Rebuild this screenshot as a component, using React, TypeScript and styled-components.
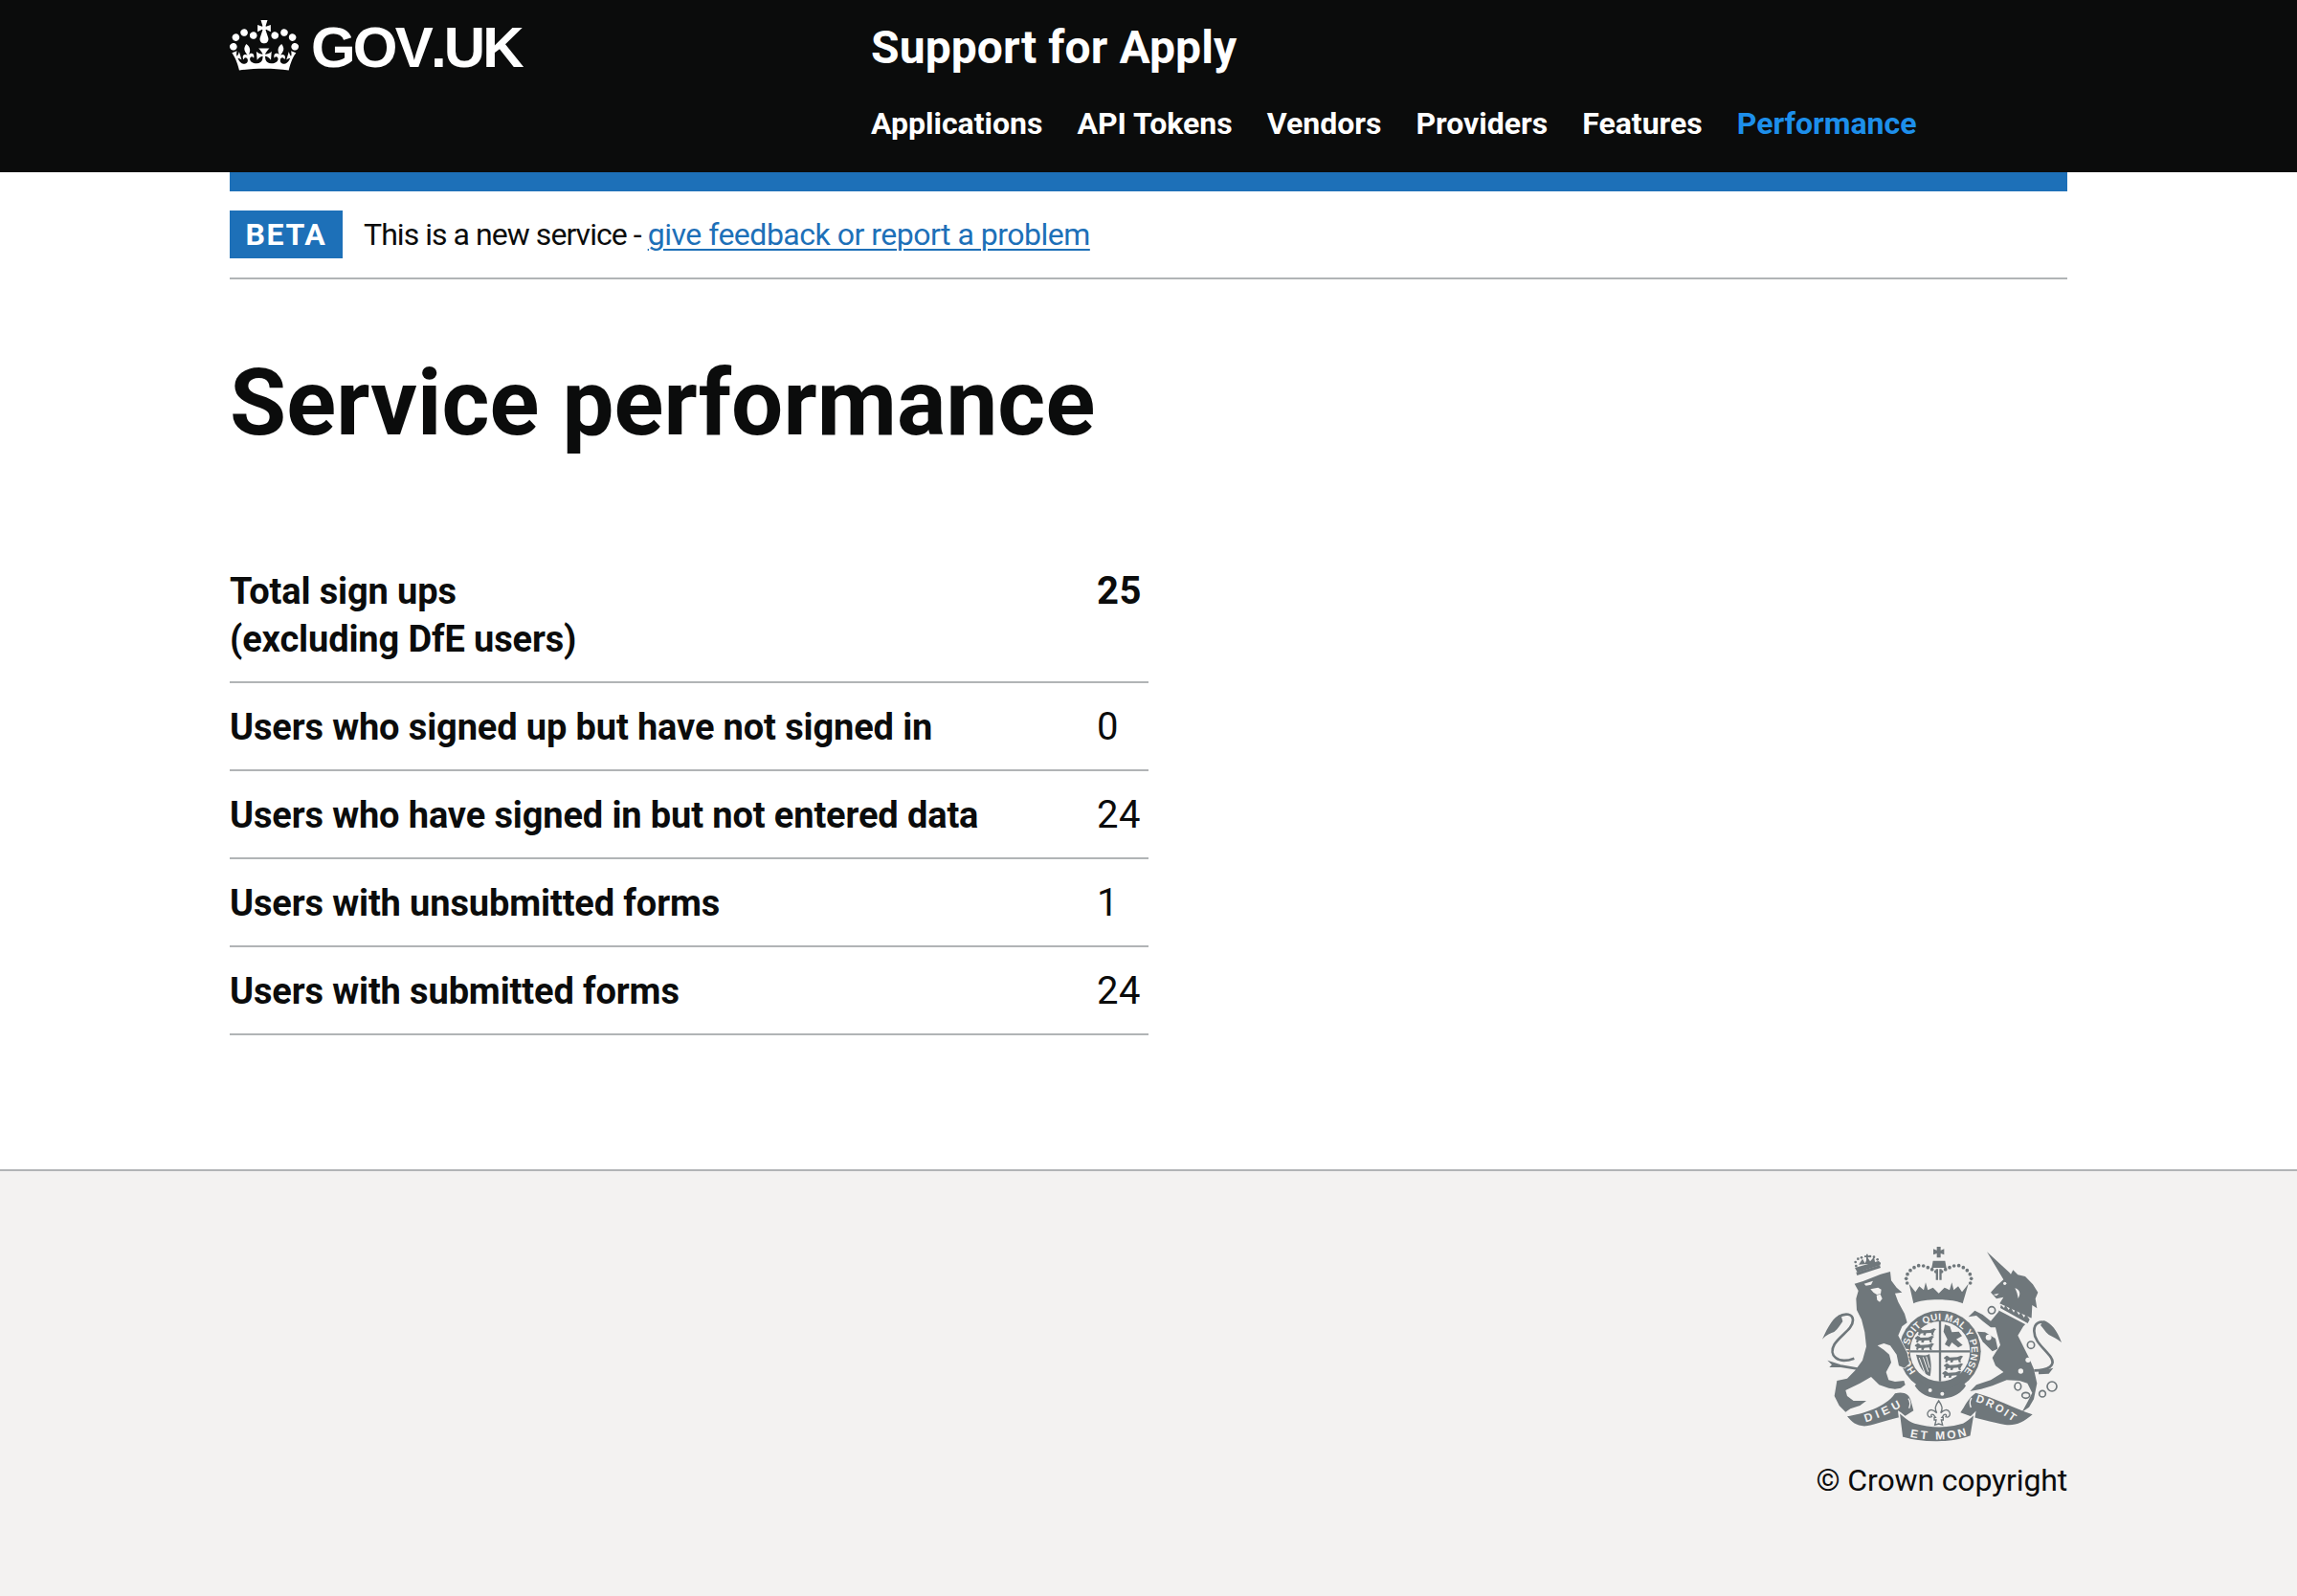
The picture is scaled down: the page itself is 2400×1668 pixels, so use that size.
import React from "react";
import styled, { createGlobalStyle } from "styled-components";

const INK = "#0b0c0c";
const CREST = "#6f777b";
const FOOT = "#f3f2f1";
const RULE = "#b1b4b6";
const BLUE = "#1d70b8";

const Global = createGlobalStyle`
  html, body { margin: 0; padding: 0; background: #fff; }
  body { font-family: Roboto, "Liberation Sans", sans-serif; color: ${INK}; }
  #root { min-height: 1668px; display: flex; flex-direction: column; }
`;

const Header = styled.header`
  background: ${INK};
  color: #fff;
  height: 180px;
`;
const HeaderInner = styled.div`
  width: 1920px;
  margin: 0 auto;
  display: flex;
`;
const LogoCol = styled.a`
  width: 670px;
  display: flex;
  align-items: flex-start;
  gap: 13px;
  padding-top: 21px;
  color: #fff;
  text-decoration: none;
`;
const Crown = styled.svg`
  width: 72px;
  height: 53px;
  flex: none;
`;
const Wordmark = styled.span`
  font-family: "Liberation Sans", Arial, sans-serif;
  font-weight: 700;
  font-size: 60px;
  line-height: 58px;
  letter-spacing: -2.8px;
  font-kerning: none;
`;
const HeaderContent = styled.div`
  display: flex;
  flex-direction: column;
`;
const ServiceName = styled.a`
  font-weight: 700;
  font-size: 48px;
  line-height: 60px;
  letter-spacing: 0.1px;
  padding-top: 20px;
  color: #fff;
  text-decoration: none;
`;
const Nav = styled.nav`
  display: flex;
  gap: 36px;
  margin-top: 30px;
`;
const NavLink = styled.a<{ $active?: boolean }>`
  font-weight: 700;
  font-size: 32px;
  line-height: 38px;
  letter-spacing: 0;
  text-decoration: none;
  color: ${(p) => (p.$active ? "#1d8feb" : "#fff")};
`;

const Main = styled.div`
  width: 1920px;
  margin: 0 auto;
  flex: 1;
`;
const BlueBar = styled.div`
  height: 20px;
  background: ${BLUE};
`;
const Phase = styled.div`
  display: flex;
  align-items: center;
  gap: 22px;
  padding: 20px 0;
  height: 50px;
  border-bottom: 2px solid ${RULE};
`;
const Tag = styled.strong`
  display: block;
  width: 118px;
  height: 50px;
  line-height: 50px;
  text-align: center;
  background: ${BLUE};
  color: #fff;
  font-weight: 700;
  font-size: 32px;
  letter-spacing: 1.6px;
`;
const PhaseText = styled.span`
  font-size: 32px;
  line-height: 40px;
  letter-spacing: -0.95px;
`;
const Link = styled.a`
  color: ${BLUE};
  letter-spacing: -0.5px;
  text-decoration: underline;
  text-decoration-thickness: 2px;
  text-underline-offset: 4px;
`;
const Title = styled.h1`
  margin: 79px 0 0;
  font-size: 96px;
  line-height: 100px;
  font-weight: 700;
  letter-spacing: 0.1px;
`;
const Table = styled.table`
  margin-top: 101px;
  width: 960px;
  border-collapse: collapse;
`;
const Row = styled.tr`
  border-bottom: 2px solid ${RULE};
`;
const Label = styled.th`
  padding: 21px 0 19px;
  text-align: left;
  font-weight: 700;
  font-size: 38px;
  line-height: 50px;
  letter-spacing: -0.13px;
`;
const Value = styled.td<{ $strong?: boolean }>`
  width: 54px;
  padding: 21px 0 19px;
  vertical-align: top;
  font-size: 40px;
  line-height: 50px;
  font-weight: ${(p) => (p.$strong ? 700 : 400)};
  letter-spacing: 0.5px;
`;

const Footer = styled.footer`
  height: 444px;
  background: ${FOOT};
  border-top: 2px solid ${RULE};
`;
const FooterInner = styled.div`
  width: 1920px;
  margin: 0 auto;
  padding-top: 75px;
  display: flex;
  flex-direction: column;
  align-items: flex-end;
`;
const CrestSvg = styled.svg`
  width: 260px;
  height: 210px;
  display: block;
`;
const Copyright = styled.a`
  margin-top: 18px;
  font-size: 32px;
  line-height: 40px;
  letter-spacing: -0.15px;
  color: ${INK};
  text-decoration: none;
`;
const CrestText = styled.text<{ $size: number }>`
  font-family: "Liberation Sans", Arial, sans-serif;
  font-weight: 700;
  font-size: ${(p) => p.$size}px;
  fill: ${FOOT};
`;

const CROWN =
  "M25 30.2c3.5 1.5 7.7-.2 9.1-3.7 1.5-3.6-.2-7.8-3.9-9.2-3.6-1.4-7.6.3-9.1 3.9-1.4 3.5.3 7.5 3.9 9zM9 39.5c3.6 1.5 7.8-.2 9.2-3.7 1.5-3.6-.2-7.8-3.9-9.1-3.6-1.5-7.6.2-9.1 3.8-1.4 3.5.3 7.5 3.8 9zM4.4 57.2c3.5 1.5 7.7-.2 9.1-3.8 1.5-3.6-.2-7.7-3.9-9.1-3.5-1.5-7.6.3-9.1 3.8-1.4 3.5.3 7.6 3.9 9.1zm38.3-21.4c3.5 1.5 7.7-.2 9.1-3.8 1.5-3.6-.2-7.7-3.9-9.1-3.6-1.5-7.6.3-9.1 3.8-1.3 3.6.4 7.7 3.9 9.1zm64.4-5.6c-3.6 1.5-7.8-.2-9.1-3.7-1.5-3.6.2-7.8 3.8-9.2 3.6-1.4 7.7.3 9.2 3.9 1.3 3.5-.4 7.5-3.9 9zm15.9 9.3c-3.6 1.5-7.7-.2-9.1-3.7-1.5-3.6.2-7.8 3.7-9.1 3.6-1.5 7.7.2 9.2 3.8 1.5 3.5-.3 7.5-3.8 9zm4.7 17.7c-3.6 1.5-7.8-.2-9.2-3.8-1.5-3.6.2-7.7 3.9-9.1 3.6-1.5 7.7.3 9.2 3.8 1.3 3.5-.4 7.6-3.9 9.1zM89.3 35.8c-3.6 1.5-7.8-.2-9.2-3.8-1.4-3.6.2-7.7 3.9-9.1 3.6-1.5 7.7.3 9.2 3.8 1.4 3.6-.3 7.7-3.9 9.1zM69.7 17.7l8.9 4.7V9.3l-8.9 2.8c-.2-.3-.5-.6-.9-.9L72.4 0H59.6l3.5 11.2c-.3.3-.6.5-.9.9l-8.8-2.8v13.1l8.8-4.7c.3.3.6.7.9.9l-5 15.4v.1c-.2.8-.4 1.6-.4 2.4 0 4.1 3.1 7.5 7 8.1h.2c.3 0 .7.1 1 .1.4 0 .7 0 1-.1h.2c4-.6 7.1-4.1 7.1-8.1 0-.8-.1-1.7-.4-2.4V34l-5.1-15.4c.4-.2.7-.6 1-.9zM66 92.8c16.9 0 32.8 1.1 47.1 3.2 4-16.9 8.9-26.7 14-33.5l-9.6-3.4c1 4.9 1.1 7.2 0 10.2-1.5-1.4-3-4.3-4.2-8.7L108.6 76c2.8-2 5-3.2 7.5-3.3-4.4 9.4-10 11.9-13.6 11.2-4.3-.8-6.3-4.6-5.6-7.9 1-4.7 5.7-5.9 8-.5 4.3-8.7-3-11.4-7.6-8.8 7.1-7.2 7.9-13.5 2.1-21.1-8 6.1-8.1 12.3-4.5 20.8-4.7-5.4-12.1-2.5-9.5 6.2 3.4-5.2 7.9-2 7.2 3.1-.6 4.3-6.4 7.8-13.5 7.2-10.3-.9-10.9-8-11.2-13.8 2.5-.5 7.1 1.8 11 7.3L80.2 60c-4.1 4.4-8 5.3-12.3 5.4 1.4-4.4 8-11.6 8-11.6H55.5s6.4 7.2 7.9 11.6c-4.2-.1-8-1-12.3-5.4l1.4 16.4c3.9-5.5 8.5-7.7 10.9-7.3-.3 5.8-.9 12.8-11.1 13.8-7.2.6-12.9-2.9-13.5-7.2-.7-5 3.8-8.3 7.1-3.1 2.7-8.7-4.6-11.6-9.4-6.2 3.7-8.5 3.6-14.7-4.6-20.8-5.8 7.6-5 13.9 2.2 21.1-4.7-2.6-11.9.1-7.7 8.8 2.3-5.5 7.1-4.2 8.1.5.7 3.3-1.3 7.1-5.7 7.9-3.5.7-9-1.8-13.5-11.2 2.5.1 4.7 1.3 7.5 3.3l-4.7-15.4c-1.2 4.4-2.7 7.2-4.3 8.7-1.1-3-.9-5.3 0-10.2l-9.5 3.4c5 6.9 9.9 16.7 14 33.5 14.8-2.1 30.8-3.2 47.7-3.2z";

const PASSANT =
  "M0 9l9-7 6 3 3 3 24-1 12-5 7 3-4 3-5 10 2 6-7-1-2-7-15 1-3 7-7-1 1-6-9 1-2 6-6-2 2-8-5-2z";

const ARCH_DOTS: [number, number][] = [
  [338, 186], [335, 172], [339, 158], [348, 146], [360, 137], [374, 131], [389, 132], [403, 137], [416, 143], [428, 150],
  [536, 186], [539, 172], [535, 158], [526, 146], [514, 137], [500, 131], [485, 132], [471, 137], [458, 143], [446, 150],
];
const LION_CROWN_DOTS: [number, number][] = [
  [178, 132], [176, 120], [184, 110], [195, 106], [222, 102], [234, 104], [245, 112], [251, 124],
];

function Crest() {
  return (
    <CrestSvg viewBox="60 60 780 630" role="img" aria-label="Royal coat of arms">
      {/* Garter */}
      <circle cx="441" cy="400" r="128" fill={CREST} />
      <circle cx="441" cy="400" r="94" fill={FOOT} />
      <path d="M441 306v188M347 400h188" stroke={CREST} strokeWidth="7" fill="none" />
      <g fill={CREST}>
        <path d={PASSANT} transform="translate(368 326)" />
        <path d={PASSANT} transform="translate(362 349)" />
        <path d={PASSANT} transform="translate(362 372)" />
        <path d={PASSANT} transform="translate(453 411)" />
        <path d={PASSANT} transform="translate(453 435)" />
        <path d={PASSANT} transform="translate(448 459)" />
        <path d="M456 316l16 6 6 18 22-2 10 14-18 10 20 18-14 8-20-16-8 14-14-8 8-16-12-24z" />
        <path d="M366 410c14 2 30 6 42-2 4 20 8 40 2 70-20-6-36-32-44-68z" />
      </g>
      <path d="M376 420l18 50M388 418l16 46M398 416l10 36" stroke={FOOT} strokeWidth="3" fill="none" />
      <path id="crest-garter" d="M366 463A98 98 0 1 1 516 463" fill="none" />
      <CrestText $size={30}>
        <textPath href="#crest-garter" textLength="445" lengthAdjust="spacing">
          HONI SOIT QUI MAL Y PENSE
        </textPath>
      </CrestText>
      <path d="M362 508c14 24 44 40 80 40s64-14 80-40l-14-18c-14 18-36 28-66 28s-52-10-64-28z" fill={CREST} />
      <circle cx="410" cy="522" r="6" fill={FOOT} />
      <circle cx="448" cy="533" r="6" fill={FOOT} />

      <g fill={CREST}>
        {/* Royal crown */}
        <path d="M431 72h12v11l11-4v18l-11-4v13h-12V93l-11 4V79l11 4zM419 116h38l4 22h-46zM428 142h7v34h-7zM439 142h7v34h-7z" />
        <path d="M344 188l20 26 12-18 14 12 6-24 7 24 16-8 18 18 18-18 16 8 7-24 6 24 14-12 12 18 20-26-18 62c-30-16-124-16-154 0z" />
        {ARCH_DOTS.map(([x, y]) => (
          <circle key={`${x}-${y}`} cx={x} cy={y} r="5.5" />
        ))}
      </g>
      <path d="M364 258c24-16 126-16 150 0l-4 14c-30-14-112-14-140 0z" fill={FOOT} />

      {/* Lion */}
      <g transform="translate(60 60)">
        <path
          d="M113 128L140 120L195 98L225 90L228 118L245 140L262 155L240 158L250 185L270 222L278 250L262 262L250 290L278 345L285 378L270 392L252 385L245 350L225 322L205 315L185 322L205 335L222 350L228 375L212 405L220 430L240 435L268 432L272 445L258 455L240 458L220 455L190 445L165 420L130 440L85 462L90 480L110 495L150 495L130 510L100 520L85 530L65 510L50 480L58 432L90 425L115 400L138 368L150 325L145 280L135 240L120 210L118 175L125 150z"
          fill={CREST}
          stroke={FOOT}
          strokeWidth="4"
          paintOrder="stroke"
        />
        <path
          d="M112 362C60 382 30 352 50 318C70 288 108 270 108 242C108 222 84 218 62 232"
          fill="none"
          stroke={CREST}
          strokeWidth="8"
        />
        <path
          d="M70 224C48 230 30 262 12 302C26 286 38 284 50 278C62 270 68 256 76 246zM70 382L28 368L42 382L34 390L74 390z"
          fill={CREST}
        />
        <path d="M70 386L130 396" stroke={CREST} strokeWidth="8" fill="none" />
        <path d="M143 128l28-9-6 12-16 3zM163 145l24-5 10 6-2 14-12 2-10-6zM182 164l12-3 6 14-8 10-8-6z" fill={FOOT} />
      </g>
      {/* Lion crown */}
      <g fill={CREST}>
        <path d="M174 138l76-22 4 14-72 22zM186 128l12-18 8 14 8-18 8 12 12-14 4 20z" />
        <path d="M204 100h6v-5h5v5h6v5h-6v10h-5v-10h-6z" />
        {LION_CROWN_DOTS.map(([x, y]) => (
          <circle key={`${x}-${y}`} cx={x} cy={y} r="4" />
        ))}
        <path d="M178 152l74-22 3 8-74 24z" />
      </g>

      {/* Unicorn */}
      <g transform="translate(450 60)">
        <path
          d="M138 28L208 92L213 98L220 85L235 100L258 105L282 130L298 155L290 175L295 205L280 195L278 235L252 262L235 290L250 320L270 360L285 395L295 440L285 490L270 515L248 530L262 505L280 470L265 440L240 432L200 430L155 448L120 458L85 465L105 445L150 430L190 405L165 385L155 360L180 320L170 285L165 265L150 265L125 245L105 228L80 232L100 212L125 225L150 245L175 215L178 190L190 170L168 175L150 155L168 135L190 115z"
          fill={CREST}
          stroke={FOOT}
          strokeWidth="4"
          paintOrder="stroke"
        />
        <path d="M108 278L132 280L165 300L172 332L155 340L125 310z" fill={CREST} stroke={FOOT} strokeWidth="3" paintOrder="stroke" />
        <path
          d="M286 400C330 400 356 384 338 358C320 332 286 310 286 276C286 250 306 244 322 250"
          fill="none"
          stroke={CREST}
          strokeWidth="8"
        />
        <path d="M316 244C340 250 358 276 372 312C358 300 346 296 332 288C320 278 314 266 306 258zM300 402L346 392L332 410L300 412z" fill={CREST} />
        <path d="M178 190L278 236L268 260L172 210z" fill={FOOT} />
        <path d="M180 204L182 194L192 204L196 194L206 210L212 200L222 218L228 208L238 226L244 216L254 234L260 224L272 240L266 252z" fill={CREST} />
        <g fill={FOOT}>
          <circle cx="267" cy="367" r="8" />
          <circle cx="244" cy="402" r="8" />
          <circle cx="143" cy="296" r="9" />
          <circle cx="194" cy="127" r="5" />
          <path d="M226 142c14 4 20 16 10 32-2-12-4-20-10-32zM158 162l18-4-8 8z" />
        </g>
        <g fill="none" stroke={CREST} strokeWidth="5">
          <circle cx="153" cy="211" r="11" />
          <circle cx="276" cy="320" r="11" />
          <ellipse cx="235" cy="450" rx="10" ry="12" />
          <ellipse cx="260" cy="478" rx="12" ry="9" />
          <circle cx="312" cy="473" r="10" />
          <circle cx="342" cy="450" r="15" />
        </g>
      </g>

      {/* Motto ribbon */}
      <path d="M150 604c50-8 120-28 150-72 26-8 46 2 50 24l8 30-26 16c-40 8-90 26-122 32-30 2-44-12-60-30z" fill={CREST} />
      <path d="M505 592c14-20 24-46 48-62 60 16 120 48 178 68-30 26-54 36-86 32-40-8-90-18-140-38z" fill={CREST} />
      <path
        d="M312 590c12 6 22 24 50 34 50 14 104 14 150 0 16-8 26-18 38-30l-12 72c-60 24-150 24-216 4z"
        fill={CREST}
        stroke={FOOT}
        strokeWidth="5"
      />
      <path d="M342 548c6 8 6 20 2 30M540 546c-6 8-6 20-2 30" stroke={FOOT} strokeWidth="4" fill="none" />
      <path id="crest-dieu" d="M208 622C250 610 290 592 340 562" fill="none" />
      <path id="crest-mon" d="M347 668C400 680 480 680 528 662" fill="none" />
      <path id="crest-droit" d="M552 558C590 568 630 592 672 622" fill="none" />
      <CrestText $size={36}>
        <textPath href="#crest-dieu" textLength="122" lengthAdjust="spacing">DIEU</textPath>
      </CrestText>
      <CrestText $size={36}>
        <textPath href="#crest-mon" textLength="180" lengthAdjust="spacing">ET MON</textPath>
      </CrestText>
      <CrestText $size={34}>
        <textPath href="#crest-droit" textLength="134" lengthAdjust="spacing">DROIT</textPath>
      </CrestText>
      <path
        d="M437 555c10 14 14 24 6 38 10-10 22-14 28-2 4 10-4 18-12 14 4-6 0-10-6-6l-6 8h4v8h-6l4 16-12-4-12 4 4-16h-6v-8h4l-6-8c-6-4-10 0-6 6-8 4-16-4-12-14 6-12 18-8 28 2-8-14-4-24 6-38z"
        fill={FOOT}
        stroke={CREST}
        strokeWidth="4"
      />
    </CrestSvg>
  );
}

const ROWS: { key: string; label: React.ReactNode; value: string; strong?: boolean }[] = [
  { key: "total", label: <>Total sign ups<br />(excluding DfE users)</>, value: "25", strong: true },
  { key: "not-signed-in", label: "Users who signed up but have not signed in", value: "0" },
  { key: "no-data", label: "Users who have signed in but not entered data", value: "24" },
  { key: "unsubmitted", label: "Users with unsubmitted forms", value: "1" },
  { key: "submitted", label: "Users with submitted forms", value: "24" },
];
const LINKS = ["Applications", "API Tokens", "Vendors", "Providers", "Features"];

export default function App() {
  return (
    <>
      <Global />
      <Header>
        <HeaderInner>
          <LogoCol href="#">
            <Crown viewBox="0 0 132 97" fill="currentColor">
              <path fillRule="evenodd" d={CROWN} />
            </Crown>
            <Wordmark>GOV.UK</Wordmark>
          </LogoCol>
          <HeaderContent>
            <ServiceName href="#">Support for Apply</ServiceName>
            <Nav>
              {LINKS.map((l) => (
                <NavLink key={l} href="#">{l}</NavLink>
              ))}
              <NavLink href="#" $active>Performance</NavLink>
            </Nav>
          </HeaderContent>
        </HeaderInner>
      </Header>
      <Main>
        <BlueBar />
        <Phase>
          <Tag>BETA</Tag>
          <PhaseText>
            This is a new service - <Link href="#">give feedback or report a problem</Link>
          </PhaseText>
        </Phase>
        <Title>Service performance</Title>
        <Table>
          <tbody>
            {ROWS.map((r) => (
              <Row key={r.key}>
                <Label>{r.label}</Label>
                <Value $strong={r.strong}>{r.value}</Value>
              </Row>
            ))}
          </tbody>
        </Table>
      </Main>
      <Footer>
        <FooterInner>
          <Crest />
          <Copyright href="#">© Crown copyright</Copyright>
        </FooterInner>
      </Footer>
    </>
  );
}
